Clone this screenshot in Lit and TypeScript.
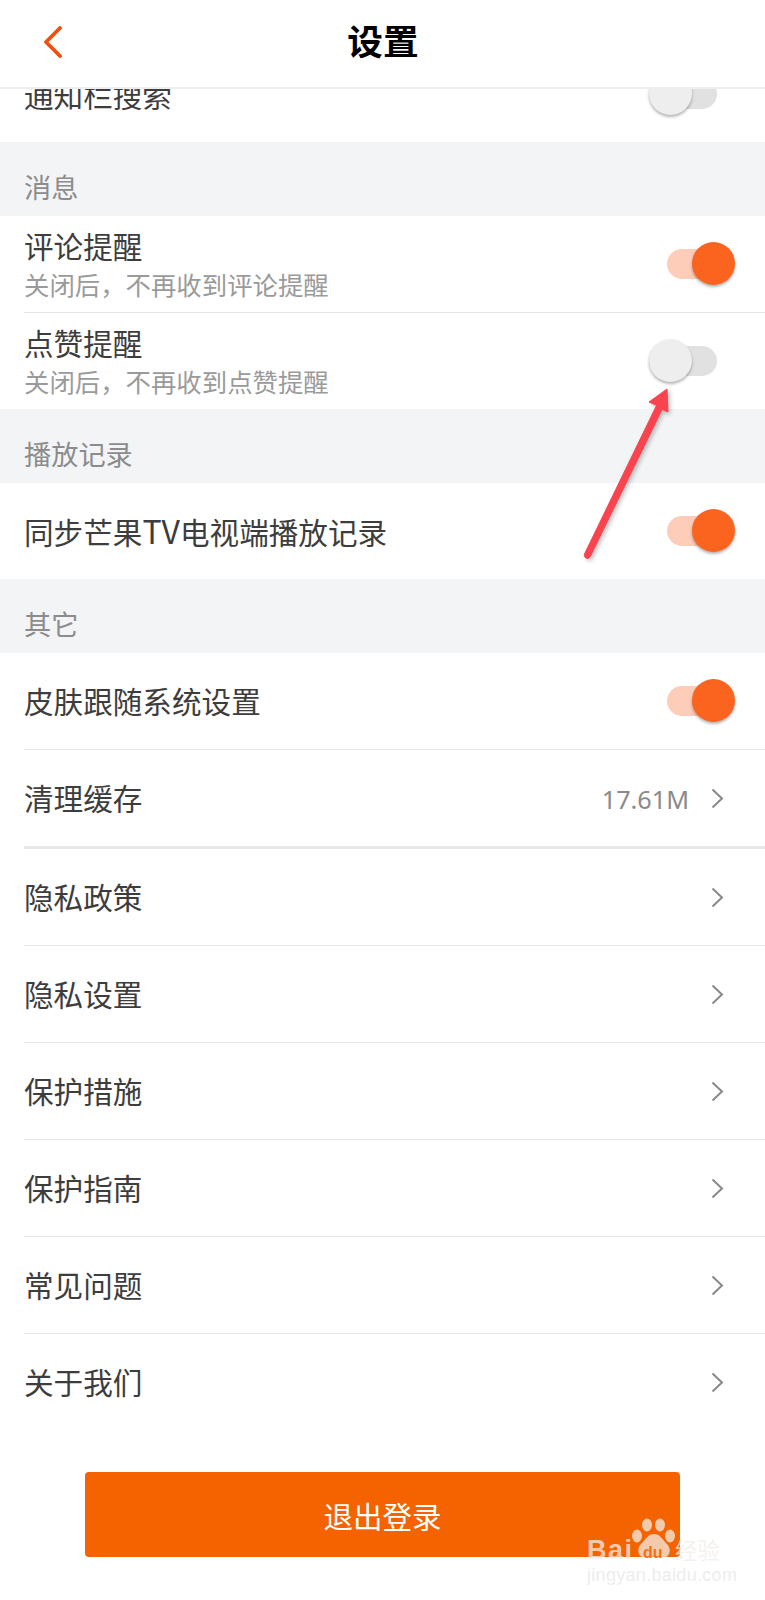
import { LitElement, html, css } from "lit";
import { customElement } from "lit/decorators.js";

const chevron = html`<svg class="chev" width="13" height="21" viewBox="0 0 13 21"><path d="M1.5 1.5 L11 10.5 L1.5 19.5" fill="none" stroke="#888" stroke-width="2"/></svg>`;

@customElement("app-root")
export class AppRoot extends LitElement {
  static styles = css`
    :host { display: block; position: relative; width: 765px; height: 1600px; overflow: hidden; background: #fff;
      font-family: "Noto Sans CJK SC", "Noto Sans", sans-serif; color: #333; }
    .header { height: 89px; box-sizing: border-box; border-bottom: 2px solid #eeeeee; padding-bottom: 7px; display: flex; align-items: center; justify-content: center; position: relative; background: #fff; }
    .back { position: absolute; left: 43px; top: 26px; }
    .title { font-size: 35.7px; font-weight: 700; color: #000; line-height: 1; padding-left: 1px; }
    .clip { height: 53px; overflow: hidden; display: flex; align-items: flex-end; }
    .clip .row { flex: 1; flex-shrink: 0; }
    .clip .text { margin-top: 2px; margin-bottom: 0; }
    .section { height: 74px; box-sizing: border-box; background: #f3f4f6; padding: 25.5px 24px 0; font-size: 27.2px; line-height: 36px; color: #8c8c8c; }
    .row { height: 97px; box-sizing: border-box; margin-left: 24px; display: flex; align-items: center; justify-content: space-between; border-bottom: 1px solid #e6e6e6; flex-shrink: 0; }
    .row.tog { height: 96.5px; }
    .row.sync { height: 96px; }
    .row.skin { height: 97px; }
    .row.last, .clip .row { border-bottom: none; }
    .row.thick { height: 99px; border-bottom: 3px solid #e8e8e8; }
    .text { margin-bottom: 1px; }
    .text.two { margin-bottom: 3px; }
    .name { font-size: 29.6px; line-height: 40px; color: #3d3d3d; }
    .name .lat { font-size: 32px; }
    .sub { font-size: 25.4px; line-height: 33px; color: #9a9a9a; margin-top: 2px; margin-bottom: -2px; }
    .right { display: flex; align-items: center; margin-right: 41px; }
    .value { font-size: 25.2px; color: #8a8a8a; margin-right: 22px; padding-top: 1px; font-family: "Noto Sans", sans-serif; }
    .toggle { position: relative; width: 68px; height: 44px; }
    .track { position: absolute; top: 7px; left: 0; width: 100%; height: 30px; border-radius: 15px; }
    .knob { position: absolute; top: 0; width: 43px; height: 43px; border-radius: 50%; box-shadow: 0 2px 3px rgba(0,0,0,.3); }
    .on .track { background: #fdcdb9; width: 56px; }
    .on .knob { background: #fb641f; left: 25px; }
    .off .track { background: #e1e1e1; }
    .off .knob { background: #eeeeee; left: 0; }
    .on { margin-right: 30px; }
    .off { margin-right: 48px; }
    .btnwrap { padding: 41px 85px 0; }
    .btn { height: 85px; background: #f56300; border-radius: 4px; color: #fff; font-size: 29.5px; display: flex; align-items: center; justify-content: center; }
    .arrow { position: absolute; left: 0; top: 0; pointer-events: none; }
    .arrow path { filter: drop-shadow(2px 2px 2px rgba(0,0,0,.25)); }
    .wm { position: absolute; left: 587px; top: 1516px; width: 140px; height: 70px; color: rgba(242,236,230,.75); }
    .wm svg { position: absolute; left: 45px; top: 1px; }
    .wm .bai { position: absolute; left: 0; top: 19px; font: 700 27px/30px "Liberation Sans", sans-serif; letter-spacing: 1.5px; }
    .wm .du { position: absolute; left: 56px; top: 29px; font: 700 16px/16px "Liberation Sans", sans-serif; color: rgba(245,99,0,.9); }
    .wm .jy { position: absolute; left: 88px; top: 19px; font-size: 22.5px; line-height: 28px; }
    .wm .url { position: absolute; left: 0; top: 49px; font: 18px/20px "Liberation Sans", sans-serif; color: rgba(232,232,232,.8); letter-spacing: .3px; }
  `;

  private toggle(on: boolean) {
    return html`<div class="toggle ${on ? "on" : "off"}"><div class="track"></div><div class="knob"></div></div>`;
  }

  private navRow(name: string, cls = "", value = "") {
    return html`<div class="row ${cls}"><div class="text"><div class="name">${name}</div></div><div class="right">${value ? html`<span class="value">${value}</span>` : ""}${chevron}</div></div>`;
  }

  render() {
    return html`
      <div class="header">
        <svg class="back" width="20" height="32" viewBox="0 0 20 32"><path d="M17 2 L3 16 L17 30" fill="none" stroke="#f0500f" stroke-width="3.8" stroke-linecap="round" stroke-linejoin="round"/></svg>
        <div class="title">设置</div>
      </div>
      <div class="clip"><div class="row"><div class="text"><div class="name">通知栏搜索</div></div>${this.toggle(false)}</div></div>
      <div class="section">消息</div>
      <div class="row tog"><div class="text two"><div class="name">评论提醒</div><div class="sub">关闭后，不再收到评论提醒</div></div>${this.toggle(true)}</div>
      <div class="row tog last"><div class="text two"><div class="name">点赞提醒</div><div class="sub">关闭后，不再收到点赞提醒</div></div>${this.toggle(false)}</div>
      <div class="section">播放记录</div>
      <div class="row sync last"><div class="text"><div class="name">同步芒果<span class="lat">TV</span>电视端播放记录</div></div>${this.toggle(true)}</div>
      <div class="section">其它</div>
      <div class="row skin"><div class="text"><div class="name">皮肤跟随系统设置</div></div>${this.toggle(true)}</div>
      ${this.navRow("清理缓存", "thick", "17.61M")}
      ${this.navRow("隐私政策")}
      ${this.navRow("隐私设置")}
      ${this.navRow("保护措施")}
      ${this.navRow("保护指南")}
      ${this.navRow("常见问题")}
      ${this.navRow("关于我们", "last")}
      <div class="btnwrap"><div class="btn">退出登录</div></div>

      <svg class="arrow" width="765" height="1600" viewBox="0 0 765 1600">
        <path d="M667 389 L649 402 L656.500 405.500 L584.500 554 Q584 558 587 558.500 Q589.500 558.500 590.500 556 L662 409.500 L668 412 Z" fill="#f9434e" stroke="#f9434e" stroke-width="1" stroke-linejoin="round"/>
      </svg>

      <div class="wm">
        <svg width="44" height="44" viewBox="0 0 44 44" fill="currentColor">
          <ellipse cx="15" cy="8" rx="5" ry="6.5"/>
          <ellipse cx="28" cy="8" rx="5" ry="6.5"/>
          <ellipse cx="5" cy="19" rx="5" ry="6.5"/>
          <ellipse cx="38" cy="19" rx="5" ry="6.5"/>
          <path d="M22 17 C16 17 14 22 9 27 C4 32 6 41 14 41 C18 41 19 39.5 22 39.5 C25 39.5 26 41 30 41 C38 41 40 32 35 27 C30 22 28 17 22 17 Z"/>
        </svg>
        <span class="bai">Bai</span><span class="du">du</span><span class="jy">经验</span>
        <span class="url">jingyan.baidu.com</span>
      </div>
    `;
  }
}
